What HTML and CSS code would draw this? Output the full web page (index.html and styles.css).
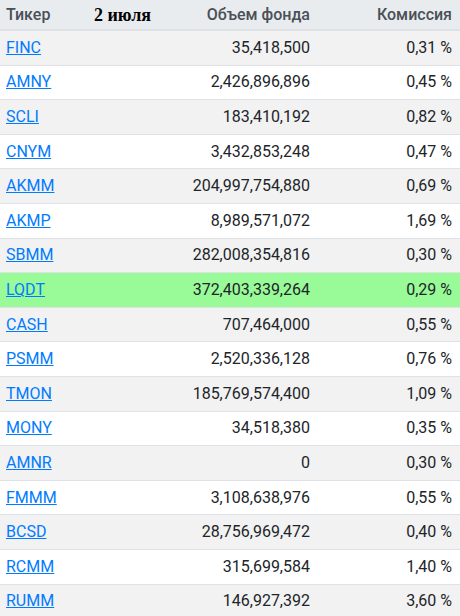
FILE: index.html
```html
<!DOCTYPE html>
<html lang="ru">
<head>
<meta charset="utf-8">
<link rel="stylesheet" href="styles.css">
</head>
<body>
<table class="funds">
  <colgroup>
    <col class="c1"><col class="c2"><col class="c3"><col class="c4">
  </colgroup>
  <thead>
    <tr>
      <th class="left">Тикер</th>
      <th class="date">2 июля</th>
      <th class="right">Объем фонда</th>
      <th class="right last">Комиссия</th>
    </tr>
  </thead>
  <tbody>
    <tr><td><a href="#">FINC</a></td><td></td><td class="right">35,418,500</td><td class="right last">0,31 %</td></tr>
    <tr><td><a href="#">AMNY</a></td><td></td><td class="right">2,426,896,896</td><td class="right last">0,45 %</td></tr>
    <tr><td><a href="#">SCLI</a></td><td></td><td class="right">183,410,192</td><td class="right last">0,82 %</td></tr>
    <tr><td><a href="#">CNYM</a></td><td></td><td class="right">3,432,853,248</td><td class="right last">0,47 %</td></tr>
    <tr><td><a href="#">AKMM</a></td><td></td><td class="right">204,997,754,880</td><td class="right last">0,69 %</td></tr>
    <tr><td><a href="#">AKMP</a></td><td></td><td class="right">8,989,571,072</td><td class="right last">1,69 %</td></tr>
    <tr><td><a href="#">SBMM</a></td><td></td><td class="right">282,008,354,816</td><td class="right last">0,30 %</td></tr>
    <tr class="best"><td><a href="#">LQDT</a></td><td></td><td class="right">372,403,339,264</td><td class="right last">0,29 %</td></tr>
    <tr><td><a href="#">CASH</a></td><td></td><td class="right">707,464,000</td><td class="right last">0,55 %</td></tr>
    <tr><td><a href="#">PSMM</a></td><td></td><td class="right">2,520,336,128</td><td class="right last">0,76 %</td></tr>
    <tr><td><a href="#">TMON</a></td><td></td><td class="right">185,769,574,400</td><td class="right last">1,09 %</td></tr>
    <tr><td><a href="#">MONY</a></td><td></td><td class="right">34,518,380</td><td class="right last">0,35 %</td></tr>
    <tr><td><a href="#">AMNR</a></td><td></td><td class="right">0</td><td class="right last">0,30 %</td></tr>
    <tr><td><a href="#">FMMM</a></td><td></td><td class="right">3,108,638,976</td><td class="right last">0,55 %</td></tr>
    <tr><td><a href="#">BCSD</a></td><td></td><td class="right">28,756,969,472</td><td class="right last">0,40 %</td></tr>
    <tr><td><a href="#">RCMM</a></td><td></td><td class="right">315,699,584</td><td class="right last">1,40 %</td></tr>
    <tr><td><a href="#">RUMM</a></td><td></td><td class="right">146,927,392</td><td class="right last">3,60 %</td></tr>
  </tbody>
</table>
</body>
</html>
```
FILE: styles.css
```css
html, body {
  margin: 0;
  padding: 0;
  background: #ffffff;
}
.funds {
  width: 460px;
  border-collapse: collapse;
  table-layout: fixed;
  font-family: Roboto, "Liberation Sans", sans-serif;
  font-size: 16px;
  line-height: 24px;
  color: #212529;
}
.c1 { width: 88px; }
.c2 { width: 72px; }
.c3 { width: 156px; }
.c4 { width: 144px; }
.funds th {
  background: #e9ecef;
  color: #495057;
  font-weight: 500;
  padding: 2.5px 6px 2.5px 6px;
  border-bottom: 2px solid #dee2e6;
  text-align: left;
  white-space: nowrap;
}
.funds th.date {
  font-family: "Liberation Serif", serif;
  font-weight: bold;
  color: #000000;
  font-size: 18px;
}
.funds td {
  padding: 4.8px 6px;
  border-top: 1px solid #dee2e6;
  white-space: nowrap;
}
.funds .right { text-align: right; }
.funds .last { padding-right: 8px; }
.funds tbody tr:nth-child(odd) { background: #f2f2f2; }
.funds tbody tr.best { background: #98fb98; }
.funds a {
  color: #007bff;
  text-decoration: underline;
}
```
